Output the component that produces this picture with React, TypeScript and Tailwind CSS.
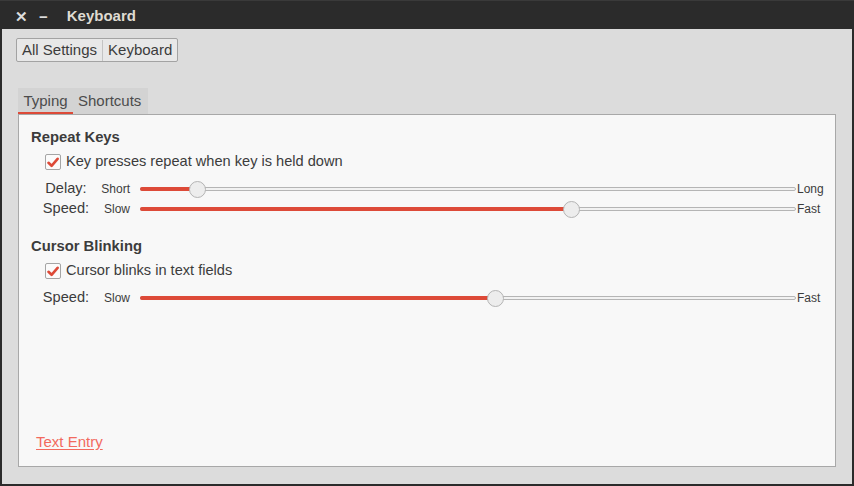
import React from "react";

const font = { fontFamily: '"Liberation Sans", Arial, sans-serif' };

function Check() {
  return (
    <div className="w-[16px] h-[16px] rounded-[2px] border border-[#a5a5a5] bg-[#fbfbfb] flex items-center justify-center">
      <svg width="12" height="11" viewBox="0 0 12 11">
        <path d="M1.5 5.8 L4.6 8.8 L10.6 1.8" fill="none" stroke="#dd4a38" strokeWidth="2.6" strokeLinecap="round" strokeLinejoin="round" />
      </svg>
    </div>
  );
}

function Slider({ label, minor, major, pos }: { label: string; minor: string; major: string; pos: number }) {
  return (
    <div className="flex items-center h-[20px]">
      <div className="w-[70px] text-center text-[14.6px] text-[#3c3c3c]">{label}</div>
      <div className="w-[29px] text-right text-[12px] text-[#3c3c3c]">{minor}</div>
      <div className="relative ml-[10px] w-[656px] h-[20px] flex items-center">
        <div className="absolute left-0 right-0 h-[4px] rounded-full border border-[#b5b5b5] bg-[#f2f2f2]" />
        <div className="absolute left-0 h-[4px] rounded-full bg-[#dd4a38]" style={{ width: pos }} />
        <div
          className="absolute w-[17px] h-[17px] rounded-full border border-[#b4b4b4] bg-[#ededed]"
          style={{ left: pos - 8.5 }}
        />
      </div>
      <div className="ml-[1px] text-[12px] text-[#3c3c3c]">{major}</div>
    </div>
  );
}

export default function App() {
  return (
    <div style={font} className="w-[854px] h-[486px] flex flex-col bg-[#2b2b2b]">
      <div className="h-[29px] shrink-0 flex items-center bg-[#2b2b2b] border-t border-[#3a3a3a] pt-[2px]">
        <span className="ml-[15px] text-[#dcdcdc] text-[15px] font-bold leading-none">✕</span>
        <span className="ml-[11px] text-[#dcdcdc] text-[15px] font-bold leading-none">−</span>
        <span className="ml-[19px] text-[#dfdbd2] text-[15px] font-bold">Keyboard</span>
      </div>
      <div className="flex-1 mx-[2px] mb-[2px] bg-[#dcdcdc] flex flex-col">
        <div className="pt-[9px] pl-[14px]">
          <div className="inline-flex h-[24px] border border-[#a3a3a3] rounded-[2px] bg-[#e8e8e8] text-[15px] text-[#3c3c3c] pt-[1px]">
            <div className="px-[5px] flex items-center border-r border-[#c4c4c4]">All Settings</div>
            <div className="px-[5px] flex items-center">Keyboard</div>
          </div>
        </div>
        <div className="mt-[26px] ml-[16px] flex h-[26px] w-[130px] bg-[#d3d3d3] text-[15px] text-[#4c4c4c]">
          <div className="w-[55px] flex items-center justify-center border-b-2 border-[#dd4a38] pt-[2px]">Typing</div>
          <div className="pl-[5px] flex items-center">Shortcuts</div>
        </div>
        <div className="mx-[16px] mb-[17px] flex-1 border border-[#a8a8a8] bg-[#f8f8f8] flex flex-col pl-[12px]">
          <div className="h-[20px] mt-[12px] flex items-center text-[14.8px] font-bold text-[#3c3c3c]">Repeat Keys</div>
          <div className="h-[20px] mt-[5px] ml-[14px] flex items-center gap-[5px] text-[14.6px] text-[#3c3c3c]">
            <Check />
            <span>Key presses repeat when key is held down</span>
          </div>
          <div className="mt-[7px]">
            <Slider label="Delay:" minor="Short" major="Long" pos={57} />
          </div>
          <Slider label="Speed:" minor="Slow" major="Fast" pos={431} />
          <div className="h-[20px] mt-[17px] flex items-center text-[14.8px] font-bold text-[#3c3c3c]">Cursor Blinking</div>
          <div className="h-[20px] mt-[5px] ml-[14px] flex items-center gap-[5px] text-[14.6px] text-[#3c3c3c]">
            <Check />
            <span>Cursor blinks in text fields</span>
          </div>
          <div className="mt-[7px]">
            <Slider label="Speed:" minor="Slow" major="Fast" pos={355} />
          </div>
          <div className="flex-1" />
          <div className="ml-[5px] mb-[13px] text-[15px] text-[#f26a5e] underline underline-offset-2">Text Entry</div>
        </div>
      </div>
    </div>
  );
}
